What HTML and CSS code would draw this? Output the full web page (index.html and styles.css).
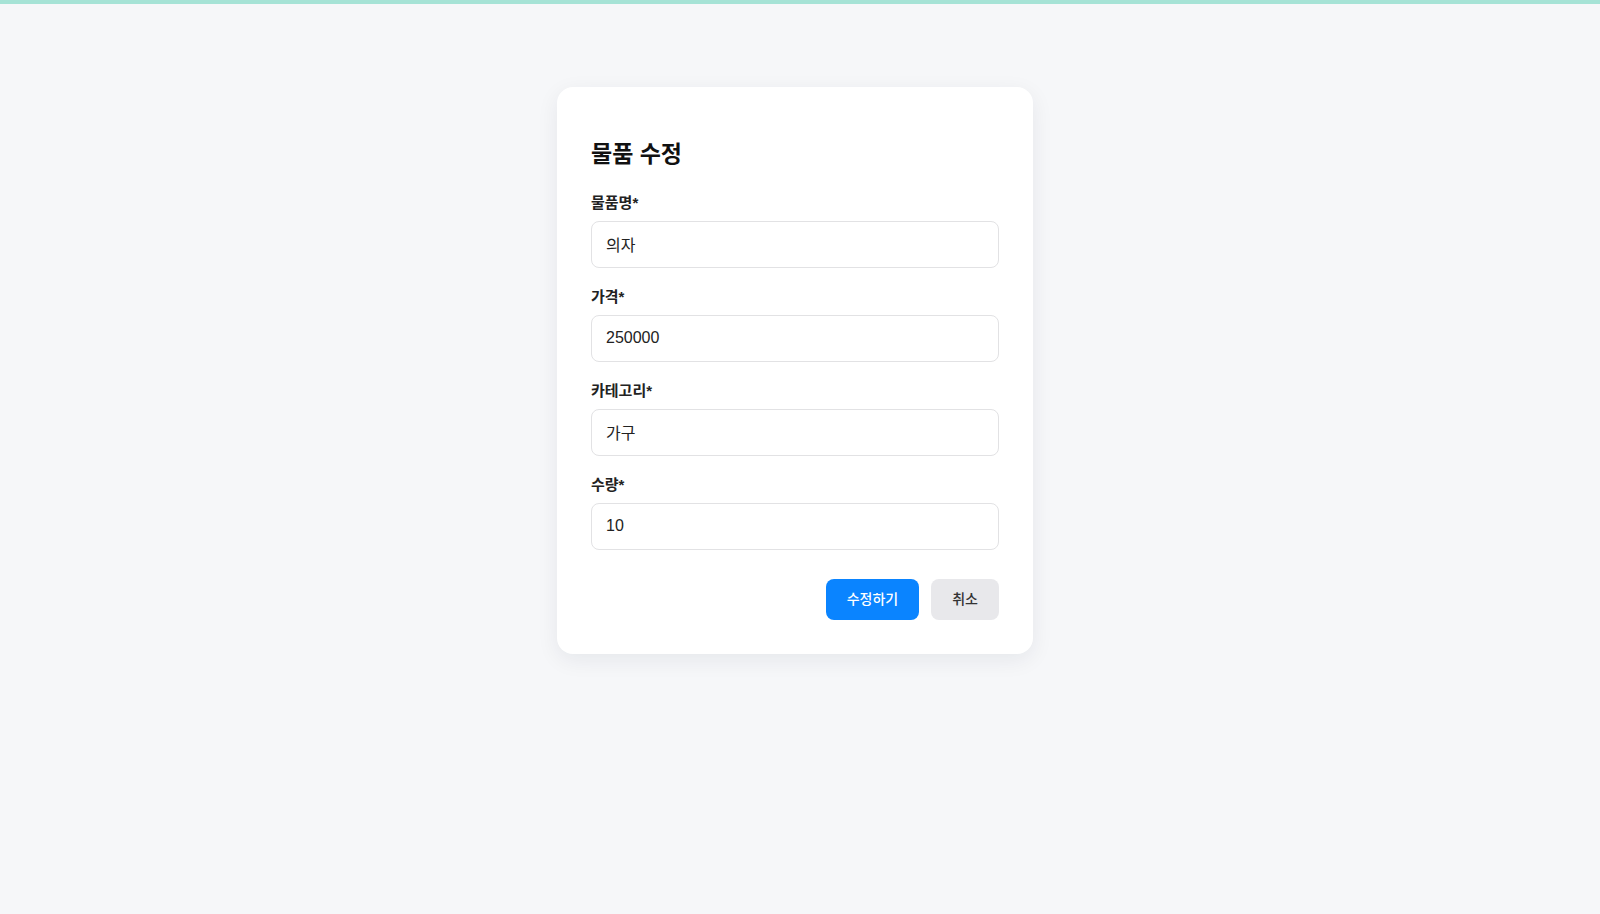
FILE: index.html
```html
<!DOCTYPE html>
<html lang="ko">
<head>
<meta charset="utf-8">
<title>물품 수정</title>
<link rel="stylesheet" href="styles.css">
</head>
<body>
<div class="topbar"></div>
<main class="page">
  <form class="card">
    <h2 class="card-title">물품 수정</h2>
    <div class="field">
      <label class="field-label" for="name">물품명*</label>
      <input class="field-input" id="name" type="text" value="의자">
    </div>
    <div class="field">
      <label class="field-label" for="price">가격*</label>
      <input class="field-input" id="price" type="text" value="250000">
    </div>
    <div class="field">
      <label class="field-label" for="category">카테고리*</label>
      <input class="field-input" id="category" type="text" value="가구">
    </div>
    <div class="field">
      <label class="field-label" for="qty">수량*</label>
      <input class="field-input" id="qty" type="text" value="10">
    </div>
    <div class="actions">
      <button class="btn btn-primary" type="button">수정하기</button>
      <button class="btn btn-secondary" type="button">취소</button>
    </div>
  </form>
</main>
</body>
</html>
```

FILE: styles.css
```css
* {
  box-sizing: border-box;
}

html, body {
  margin: 0;
  padding: 0;
}

body {
  background: #f6f7f9;
  font-family: "Liberation Sans", "Noto Sans CJK KR", sans-serif;
  color: #111;
  min-height: 914px;
}

.topbar {
  height: 4px;
  background: #a6e3d6;
}

.page {
  display: flex;
  justify-content: center;
  padding-top: 83px;
  padding-right: 10px;
}

.card {
  width: 476px;
  background: #fff;
  border-radius: 16px;
  padding: 34px;
  box-shadow: 0 6px 22px rgba(20, 30, 50, 0.07);
}

.card-title {
  margin: 18px 0 24px;
  font-size: 23px;
  line-height: 30px;
  font-weight: 700;
  color: #111;
}

.field {
  display: flex;
  flex-direction: column;
  margin-bottom: 19px;
}

.field-label {
  font-size: 15px;
  line-height: 20px;
  font-weight: 700;
  color: #222;
  margin-bottom: 8px;
}

.field-input {
  height: 47px;
  padding: 0 14px 2px;
  border: 1px solid #e2e2e4;
  border-radius: 8px;
  font-family: "Liberation Sans", "Noto Sans CJK KR", sans-serif;
  font-size: 16px;
  color: #222;
  background: #fff;
  outline: none;
}

/* margin collapses with the last field's bottom margin */
.actions {
  display: flex;
  justify-content: flex-end;
  gap: 12px;
  margin-top: 29px;
}

.btn {
  height: 41px;
  padding: 0 21px 3px;
  border: none;
  border-radius: 8px;
  font-family: "Liberation Sans", "Noto Sans CJK KR", sans-serif;
  font-size: 14px;
  font-weight: 500;
  cursor: pointer;
}

.btn-primary {
  background: #0a84ff;
  color: #fff;
}

.btn-secondary {
  background: #e8e8eb;
  color: #333;
}
```
